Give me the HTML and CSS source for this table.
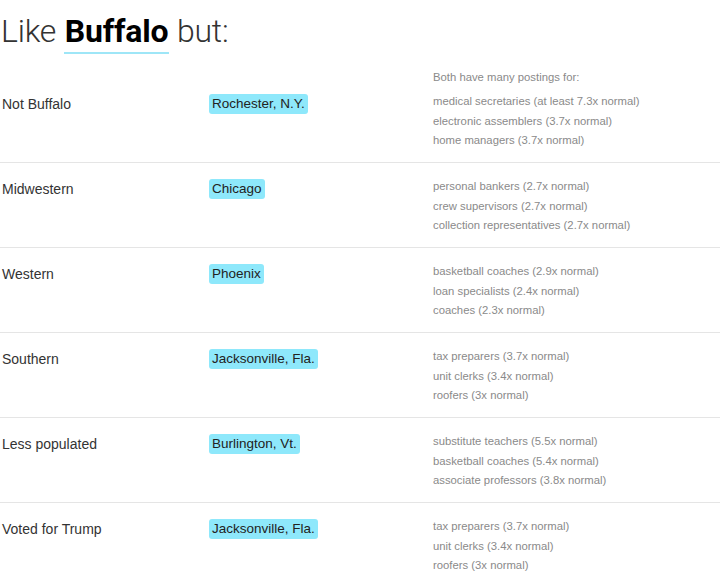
FILE: index.html
```html
<!DOCTYPE html>
<html>
<head>
<meta charset="utf-8">
<link rel="stylesheet" href="styles.css">
</head>
<body>
<div class="page">
  <h1 class="title">Like <span class="city">Buffalo</span> but:</h1>
  <div class="table">
    <div class="row first">
      <div class="head">Both have many postings for:</div>
      <div class="label">Not Buffalo</div>
      <div class="match"><span class="badge">Rochester, N.Y.</span></div>
      <div class="jobs">
        <div class="job">medical secretaries (at least 7.3x normal)</div>
        <div class="job">electronic assemblers (3.7x normal)</div>
        <div class="job">home managers (3.7x normal)</div>
      </div>
    </div>
    <div class="row">
      <div class="label">Midwestern</div>
      <div class="match"><span class="badge">Chicago</span></div>
      <div class="jobs">
        <div class="job">personal bankers (2.7x normal)</div>
        <div class="job">crew supervisors (2.7x normal)</div>
        <div class="job">collection representatives (2.7x normal)</div>
      </div>
    </div>
    <div class="row">
      <div class="label">Western</div>
      <div class="match"><span class="badge">Phoenix</span></div>
      <div class="jobs">
        <div class="job">basketball coaches (2.9x normal)</div>
        <div class="job">loan specialists (2.4x normal)</div>
        <div class="job">coaches (2.3x normal)</div>
      </div>
    </div>
    <div class="row">
      <div class="label">Southern</div>
      <div class="match"><span class="badge">Jacksonville, Fla.</span></div>
      <div class="jobs">
        <div class="job">tax preparers (3.7x normal)</div>
        <div class="job">unit clerks (3.4x normal)</div>
        <div class="job">roofers (3x normal)</div>
      </div>
    </div>
    <div class="row">
      <div class="label">Less populated</div>
      <div class="match"><span class="badge">Burlington, Vt.</span></div>
      <div class="jobs">
        <div class="job">substitute teachers (5.5x normal)</div>
        <div class="job">basketball coaches (5.4x normal)</div>
        <div class="job">associate professors (3.8x normal)</div>
      </div>
    </div>
    <div class="row last">
      <div class="label">Voted for Trump</div>
      <div class="match"><span class="badge">Jacksonville, Fla.</span></div>
      <div class="jobs">
        <div class="job">tax preparers (3.7x normal)</div>
        <div class="job">unit clerks (3.4x normal)</div>
        <div class="job">roofers (3x normal)</div>
      </div>
    </div>
  </div>
</div>
</body>
</html>
```

FILE: styles.css
```css
html, body {
  margin: 0;
  padding: 0;
  background: #fff;
}
.page {
  width: 720px;
  font-family: "Liberation Sans", Arial, sans-serif;
  color: #333;
}
.title {
  margin: 0;
  box-sizing: border-box;
  height: 54px;
  padding: 11px 0 0 1px;
  font-family: Roboto, "Liberation Sans", sans-serif;
  font-weight: 300;
  font-size: 32px;
  line-height: 40px;
  color: #333;
  white-space: nowrap;
  overflow: hidden;
  letter-spacing: -0.2px;
}
.city {
  font-weight: 700;
  color: #000;
  display: inline-block;
  line-height: 41px;
  padding: 0 1px;
  border-bottom: 2px solid #9ee6f7;
}
.row {
  display: grid;
  grid-template-columns: 207px 224px 1fr;
  padding: 14px 0 11.5px 2px;
  border-bottom: 1px solid #e5e5e5;
}
.row.last {
  border-bottom: none;
}
.row.first {
  grid-template-rows: auto auto;
}
.row.first .head {
  grid-column: 3;
  grid-row: 1;
  margin-bottom: 4.75px;
}
.row.first .label,
.row.first .match,
.row.first .jobs {
  grid-row: 2;
}
.label {
  grid-column: 1;
  font-size: 14px;
  line-height: 20px;
  padding-top: 2px;
  color: #333;
}
.match {
  grid-column: 2;
  padding-top: 2px;
}
.badge {
  display: inline-block;
  background: #8ee8fb;
  border-radius: 3px;
  padding: 0 3px;
  font-size: 13.5px;
  line-height: 20px;
  color: #222;
}
.jobs {
  grid-column: 3;
  font-size: 11.3px;
  line-height: 19.5px;
  color: #8a8a8a;
}
.head {
  font-size: 11.3px;
  line-height: 19.5px;
  color: #8a8a8a;
}
```
